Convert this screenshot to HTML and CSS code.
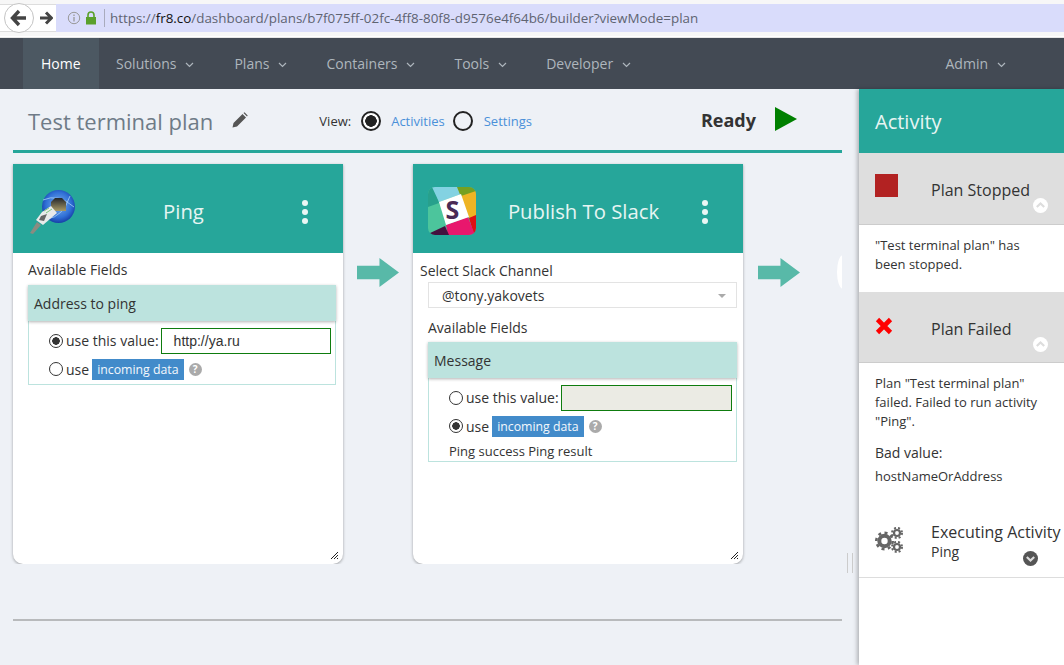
FILE: index.html
```html
<!DOCTYPE html>
<html lang="en">
<head>
    <meta charset="UTF-8">
    <title>Fr8 - Plan Builder</title>
    <link rel="stylesheet" href="styles.css">
</head>
<body>

    <!-- browser chrome -->
    <div class="browser-bar">
        <div class="nav-btns">
            <span class="back-btn">
                <svg width="20" height="20" viewBox="0 0 20 20"><path d="M10 3 L3.5 10 L10 17 M4 10 H17" fill="none" stroke="#444" stroke-width="3.4"/></svg>
            </span>
            <span class="fwd-btn">
                <svg width="14" height="14" viewBox="0 0 14 14"><path d="M7 1.5 L12.5 7 L7 12.5 M12 7 H1" fill="none" stroke="#444" stroke-width="3"/></svg>
            </span>
        </div>
        <div class="url-bar">
            <svg class="info-icon" width="14" height="14" viewBox="0 0 14 14"><circle cx="7" cy="7" r="5.7" fill="none" stroke="#999" stroke-width="1"/><path d="M7 6 V10.5 M7 3.4 V5" stroke="#999" stroke-width="1.3"/></svg>
            <svg class="lock-icon" width="12" height="14" viewBox="0 0 12 14"><path d="M3 6 V4 A3 3 0 0 1 9 4 V6" fill="none" stroke="#5aa02c" stroke-width="1.6"/><rect x="1" y="6" width="10" height="7.5" fill="#5aa02c"/></svg>
            <span class="url-sep"></span>
            <span class="url-text">https://<b>fr8.co</b>/dashboard/plans/b7f075ff-02fc-4ff8-80f8-d9576e4f64b6/builder?viewMode=plan</span>
        </div>
    </div>

    <!-- main nav -->
    <nav class="topnav">
        <a class="nav-item active">Home</a>
        <a class="nav-item">Solutions <svg class="caret" width="9" height="6" viewBox="0 0 9 6"><path d="M1 1 L4.5 4.5 L8 1" fill="none" stroke="#aeb6bd" stroke-width="1.2"/></svg></a>
        <a class="nav-item">Plans <svg class="caret" width="9" height="6" viewBox="0 0 9 6"><path d="M1 1 L4.5 4.5 L8 1" fill="none" stroke="#aeb6bd" stroke-width="1.2"/></svg></a>
        <a class="nav-item">Containers <svg class="caret" width="9" height="6" viewBox="0 0 9 6"><path d="M1 1 L4.5 4.5 L8 1" fill="none" stroke="#aeb6bd" stroke-width="1.2"/></svg></a>
        <a class="nav-item">Tools <svg class="caret" width="9" height="6" viewBox="0 0 9 6"><path d="M1 1 L4.5 4.5 L8 1" fill="none" stroke="#aeb6bd" stroke-width="1.2"/></svg></a>
        <a class="nav-item">Developer <svg class="caret" width="9" height="6" viewBox="0 0 9 6"><path d="M1 1 L4.5 4.5 L8 1" fill="none" stroke="#aeb6bd" stroke-width="1.2"/></svg></a>
        <a class="nav-item admin">Admin <svg class="caret" width="9" height="6" viewBox="0 0 9 6"><path d="M1 1 L4.5 4.5 L8 1" fill="none" stroke="#aeb6bd" stroke-width="1.2"/></svg></a>
    </nav>

    <div class="content">
        <div class="builder">
            <div class="plan-head">
                <h1 class="plan-title">Test terminal plan</h1>
                <svg class="pencil" width="16" height="16" viewBox="0 0 16 16"><path d="M0.5 15.5 L1.5 11 L10.5 2 L14 5.5 L5 14.5 Z M11.5 1 L12.5 0.3 L15.7 3.5 L15 4.5 Z" fill="#555"/></svg>
                <span class="view-label">View:</span>
                <span class="big-radio on"></span>
                <a class="view-link">Activities</a>
                <span class="big-radio off"></span>
                <a class="view-link settings">Settings</a>
                <span class="ready">Ready</span>
                <svg class="play" width="22" height="24" viewBox="0 0 22 24"><path d="M0 0 L22 12 L0 24 Z" fill="#008000"/></svg>
            </div>

            <div class="cards">
                <!-- Ping card -->
                <section class="card">
                    <header class="card-head">
                        <svg class="card-logo" width="48" height="48" viewBox="0 0 48 48">
                            <defs>
                                <radialGradient id="globeFill" cx="0.5" cy="0.45" r="0.55">
                                    <stop offset="0" stop-color="#7fb2ec"/>
                                    <stop offset="0.7" stop-color="#2f6fd6"/>
                                    <stop offset="1" stop-color="#173fa8"/>
                                </radialGradient>
                                <linearGradient id="portFill" x1="0" y1="0" x2="0" y2="1">
                                    <stop offset="0" stop-color="#23262c"/>
                                    <stop offset="1" stop-color="#a89a66"/>
                                </linearGradient>
                            </defs>
                            <circle cx="30.5" cy="19.5" r="16.5" fill="url(#globeFill)"/>
                            <path d="M15 13 Q30 6 46 20 M19 32 Q35 30 42 9" fill="none" stroke="#a8d0f5" stroke-width="0.8"/>
                            <path d="M23 15 L27 11 H34 L38 15 V24 H23 Z" fill="url(#portFill)"/>
                            <path d="M14 25 L23 19 L29 26 L15 38 L8 33 Z" fill="#e8eaea"/>
                            <path d="M16 24 L21 21 M18 26 L24 22" stroke="#7fc77f" stroke-width="1"/>
                            <path d="M13 29 L19 27 L16 34 L11 33 Z" fill="#666"/>
                            <path d="M9 35 L2 46 L5 47 L13 38 Z" fill="#8b8b80"/>
                        </svg>
                        <span class="card-title">Ping</span>
                        <span class="dots"><i></i><i></i><i></i></span>
                    </header>
                    <div class="card-body">
                        <div class="fld-label">Available Fields</div>
                        <div class="field-box">
                            <div class="field-head">Address to ping</div>
                            <div class="field-opts">
                                <div class="opt-row first">
                                    <span class="radio on"></span>
                                    <span class="opt-label">use this value:</span>
                                    <span class="val-input">http://ya.ru</span>
                                </div>
                                <div class="opt-row">
                                    <span class="radio"></span>
                                    <span>use</span>
                                    <span class="chip">incoming data</span>
                                    <span class="help">?</span>
                                </div>
                            </div>
                        </div>
                    </div>
                    <span class="grip"></span>
                </section>

                <svg class="arrow" width="42" height="29" viewBox="0 0 43 30" preserveAspectRatio="none"><path d="M0 8 H23 V0 L43 15 L23 30 V22 H0 Z" fill="#58b9a8"/></svg>

                <!-- Slack card -->
                <section class="card">
                    <header class="card-head">
                        <svg class="card-logo slack-logo" width="48" height="48" viewBox="0 0 48 48">
                            <defs><clipPath id="slackClip"><rect width="48" height="48" rx="7"/></clipPath></defs>
                            <g clip-path="url(#slackClip)">
                                <rect width="48" height="48" fill="#4cc59c"/>
                                <path d="M0 0 H6 L11 16 L0 20 Z" fill="#27a08c"/>
                                <path d="M4 0 H30 L33 7 L11 15 Z" fill="#83d2e2"/>
                                <path d="M29 0 H48 V5 L33 10 Z" fill="#75a021"/>
                                <path d="M33 9 L48 4 V29 L41 31 Z" fill="#eeb424"/>
                                <path d="M41 31 L48 28 V48 H46 Z" fill="#dc0f14"/>
                                <path d="M18 38 L40 30 L47 48 H20 Z" fill="#e8176d"/>
                                <path d="M0 47 L17 39 L21 48 H0 Z" fill="#44103f"/>
                                <path d="M11 15 L33 7 L41 30 L18 38 Z" fill="#fff"/>
                                <text x="24.5" y="32" text-anchor="middle" class="slack-s">S</text>
                            </g>
                        </svg>
                        <span class="card-title">Publish To Slack</span>
                        <span class="dots"><i></i><i></i><i></i></span>
                    </header>
                    <div class="card-body slack-body">
                        <div class="channel-label">Select Slack Channel</div>
                        <div class="select-box">@tony.yakovets<span class="sel-caret"></span></div>
                        <div class="fld-label second">Available Fields</div>
                        <div class="field-box">
                            <div class="field-head">Message</div>
                            <div class="field-opts">
                                <div class="opt-row first">
                                    <span class="radio"></span>
                                    <span class="opt-label">use this value:</span>
                                    <span class="val-input empty"></span>
                                </div>
                                <div class="opt-row">
                                    <span class="radio on"></span>
                                    <span>use</span>
                                    <span class="chip">incoming data</span>
                                    <span class="help">?</span>
                                </div>
                                <div class="ping-res">Ping success Ping result</div>
                            </div>
                        </div>
                    </div>
                    <span class="grip"></span>
                </section>

                <svg class="arrow next" width="42" height="29" viewBox="0 0 43 30" preserveAspectRatio="none"><path d="M0 8 H23 V0 L43 15 L23 30 V22 H0 Z" fill="#58b9a8"/></svg>
                <span class="next-card"></span>
            </div>

            <hr class="bottom-rule">
        </div>

        <span class="splitter"></span>

        <!-- activity panel -->
        <aside class="activity">
            <div class="activity-head">Activity</div>

            <div class="act-row">
                <span class="act-icon"><span class="stop-sq"></span></span>
                <span class="act-title">Plan Stopped</span>
                <svg class="chev-btn" width="15" height="15" viewBox="0 0 15 15"><circle cx="7.5" cy="7.5" r="7.5" fill="#fff"/><path d="M3.8 9 L7.5 5.5 L11.2 9" fill="none" stroke="#ddd" stroke-width="2.2"/></svg>
            </div>
            <div class="act-text stopped">"Test terminal plan" has been stopped.</div>

            <div class="act-row failed">
                <span class="act-icon">
                    <svg width="18" height="18" viewBox="0 0 18 18"><path d="M2.5 2.5 L15.5 15.5 M15.5 2.5 L2.5 15.5" stroke="#f00" stroke-width="4.6"/></svg>
                </span>
                <span class="act-title">Plan Failed</span>
                <svg class="chev-btn" width="15" height="15" viewBox="0 0 15 15"><circle cx="7.5" cy="7.5" r="7.5" fill="#fff"/><path d="M3.8 9 L7.5 5.5 L11.2 9" fill="none" stroke="#ddd" stroke-width="2.2"/></svg>
            </div>
            <div class="act-text fail-text">
                <p>Plan "Test terminal plan" failed. Failed to run activity "Ping".</p>
                <p class="bad">Bad value:</p>
                <p class="host">hostNameOrAddress</p>
            </div>

            <div class="exec-row">
                <svg class="gears" width="30" height="26" viewBox="0 0 30 26">
                    <g fill="none" stroke="#666">
                        <circle cx="10.5" cy="14" r="5.2" stroke-width="4"/>
                        <circle cx="10.5" cy="14" r="8.2" stroke-width="2.6" stroke-dasharray="3 3.4"/>
                        <circle cx="23" cy="6" r="3" stroke-width="2.2"/>
                        <circle cx="23" cy="6" r="5" stroke-width="2" stroke-dasharray="2 2"/>
                        <circle cx="23" cy="20" r="3" stroke-width="2.2"/>
                        <circle cx="23" cy="20" r="5" stroke-width="2" stroke-dasharray="2 2"/>
                    </g>
                </svg>
                <div class="exec-text">
                    <div class="act-title">Executing Activity</div>
                    <div class="exec-sub">Ping</div>
                </div>
                <svg class="chev-btn down" width="15" height="15" viewBox="0 0 15 15"><circle cx="7.5" cy="7.5" r="7.5" fill="#555"/><path d="M3.8 6 L7.5 9.5 L11.2 6" fill="none" stroke="#ddd" stroke-width="2.2"/></svg>
            </div>
        </aside>
    </div>

</body>
</html>
```

FILE: styles.css
```css
* {
    box-sizing: border-box;
}

html, body {
    margin: 0;
    height: 665px;
    overflow: hidden;
}

body {
    font-family: "Open Sans", "Noto Sans", sans-serif;
    font-size: 14px;
    color: #333;
    background-color: #eef1f6;
}

/* browser chrome */
.browser-bar {
    height: 38px;
    padding-top: 4px;
    display: flex;
    background-color: #f7f7f7;
    border-bottom: 1px solid #e6e6e6;
    box-shadow: inset 0 -1px 0 #fff;
}

.nav-btns {
    width: 56px;
    height: 28px;
    padding-left: 4px;
    display: flex;
    align-items: center;
    background-color: #fff;
    border-top: 1px solid #ddd;
    border-bottom: 1px solid #ddd;
}

.back-btn {
    width: 30px;
    height: 30px;
    flex: none;
    display: flex;
    align-items: center;
    justify-content: center;
    border: 1px solid #c4c4c4;
    border-radius: 50%;
    background-color: #fff;
}

.fwd-btn {
    margin-left: 5px;
    display: flex;
}

.url-bar {
    flex: 1;
    height: 28px;
    display: flex;
    align-items: center;
    padding-left: 6px;
    background-color: #d9dcfb;
    font-family: "Open Sans", sans-serif;
    font-size: 13.4px;
    color: #5f6472;
    white-space: nowrap;
}

.info-icon {
    margin-left: 5px;
}

.lock-icon {
    margin-left: 4px;
}

.url-sep {
    width: 1px;
    height: 18px;
    margin: 0 5px 0 7px;
    background-color: #a9abbd;
}

.url-text b {
    font-weight: normal;
    color: #111;
}

/* main nav */
.topnav {
    height: 51px;
    padding-left: 23px;
    display: flex;
    background-color: #434a54;
}

.nav-item {
    height: 51px;
    padding: 0 18px;
    display: flex;
    align-items: center;
    gap: 9px;
    color: #aeb6bd;
    font-size: 14px;
    white-space: nowrap;
    margin-right: -1px;
}

.nav-item.active {
    color: #fff;
    background-color: #4c5862;
    width: 76px;
    margin-right: 0;
}

.nav-item:nth-child(2) { margin-left: -1px; }
.nav-item:nth-child(3) { margin-left: 5px; }
.nav-item:nth-child(4) { margin-left: 4px; }
.nav-item:nth-child(5) { margin-left: 4px; }
.nav-item:nth-child(6) { margin-left: 4px; }

.nav-item.admin {
    margin-left: auto;
    margin-right: 40px;
}

.caret {
    margin-top: 2px;
}

/* builder area */
.content {
    height: 576px;
    display: flex;
}

.builder {
    width: 842px;
    padding-left: 13px;
    flex: none;
    overflow: hidden;
}

.plan-head {
    height: 64px;
    padding-left: 15px;
    padding-top: 3px;
    display: flex;
    align-items: center;
    border-bottom: 3px solid #26a69a;
}

.plan-title {
    margin: 0;
    font-size: 22px;
    font-weight: normal;
    color: #6f7b87;
    white-space: nowrap;
}

.pencil {
    margin-left: 19px;
    margin-top: -2px;
}

.view-label {
    margin-left: 71px;
    font-size: 13px;
}

.big-radio {
    width: 20px;
    height: 20px;
    margin-left: 10px;
    flex: none;
    border: 2.5px solid #222;
    border-radius: 50%;
    background-color: #fff;
}

.big-radio.on {
    background: radial-gradient(circle, #222 0 5.5px, #fff 6px);
}

.big-radio.off {
    margin-left: 8px;
    background-color: transparent;
}

.view-link {
    margin-left: 10px;
    font-size: 13px;
    color: #4a90d9;
}

.view-link.settings {
    margin-left: 11px;
}

.ready {
    margin-left: 169px;
    margin-top: -2px;
    font-size: 18px;
    font-weight: bold;
    color: #333;
}

.play {
    margin-left: 19px;
    margin-top: -4px;
}

.cards {
    margin-left: -13px;
    padding-left: 13px;
    padding-top: 11px;
    height: 411px;
    display: flex;
    align-items: flex-start;
    width: 842px;
    overflow: hidden;
}

.card {
    position: relative;
    width: 330px;
    height: 400px;
    flex: none;
    background-color: #fff;
    border-radius: 0 0 10px 10px;
    box-shadow: 0 1px 3px rgba(0, 0, 0, 0.35);
}

.card-head {
    height: 89px;
    padding: 6px 35px 0 15px;
    display: flex;
    align-items: center;
    background-color: #26a69a;
}

.card-logo {
    flex: none;
    margin-top: -2px;
}

.slack-s {
    font-family: "Open Sans", sans-serif;
    font-weight: bold;
    font-size: 25px;
    fill: #4a2a55;
}

.card-title {
    flex: 1;
    text-align: center;
    color: #e6f5f3;
    font-size: 20.3px;
    margin: -2px 2px 0 0;
}

.dots {
    width: 6px;
    display: flex;
    flex-direction: column;
    gap: 3px;
    margin-left: 9px;
}

.dots i {
    width: 6px;
    height: 6px;
    border-radius: 50%;
    background-color: #eaf6f4;
}

.card-body {
    padding: 7px 7px 0 15px;
    font-size: 14px;
}

.fld-label {
    line-height: 20px;
}

.field-box {
    margin-top: 5px;
    border: 1px solid #bce3de;
    border-top: 0;
}

.field-head {
    height: 36px;
    margin: 0 -1px;
    padding-left: 6px;
    display: flex;
    align-items: center;
    background-color: #bce3de;
    box-shadow: 0 1px 3px rgba(0, 0, 0, 0.3);
}

.field-opts {
    padding: 7px 4px 0 20px;
}

.opt-row {
    height: 30px;
    display: flex;
    align-items: center;
    gap: 3px;
    white-space: nowrap;
}

.opt-row.first {
    height: 26px;
}

.opt-label {
    margin-top: -2px;
}

.radio {
    width: 14px;
    height: 14px;
    flex: none;
    border: 1px solid #333;
    border-radius: 50%;
    background-color: #fff;
}

.radio.on {
    background: radial-gradient(circle, #333 0 3.5px, #fff 4px);
}

.val-input {
    height: 26px;
    flex: 1;
    margin-left: -1px;
    padding-left: 12px;
    line-height: 25px;
    font-family: "Liberation Sans", Arial, sans-serif;
    border: 1px solid #0e7c0e;
    background-color: #fff;
}

.val-input.empty {
    background-color: #ebebe4;
}

.chip {
    height: 21px;
    padding: 0 5px;
    line-height: 21px;
    font-size: 12.3px;
    color: #f4f8fc;
    background-color: #428bca;
}

.help {
    width: 13px;
    height: 13px;
    margin-left: 2px;
    border-radius: 50%;
    background-color: #aaa;
    color: #fff;
    font-size: 10px;
    font-weight: bold;
    line-height: 13px;
    text-align: center;
}

.grip {
    position: absolute;
    right: 5px;
    bottom: 5px;
    width: 8px;
    height: 8px;
    background: repeating-linear-gradient(135deg, #222 0 1px, #fff 1px 2px);
    clip-path: polygon(100% 0, 100% 100%, 0 100%);
}

.arrow {
    flex: none;
    margin: 94px 14px 0 14px;
}

.arrow.next {
    margin-left: 15px;
}

.next-card {
    width: 6px;
    height: 34px;
    margin: 91px 0 0 23px;
    flex: none;
    background-color: #fff;
    border-radius: 6px 0 0 6px / 17px 0 0 17px;
}

.slack-body {
    padding: 9px 6px 0 7px;
    font-size: 14px;
}

.channel-label {
    line-height: 17px;
}

.select-box {
    position: relative;
    height: 26px;
    margin: 3px 0 0 8px;
    padding-left: 13px;
    line-height: 25px;
    border: 1px solid #e3e3e3;
}

.sel-caret {
    position: absolute;
    right: 10px;
    top: 11px;
    border: 4px solid transparent;
    border-top: 4px solid #aaa;
    border-bottom: 0;
}

.fld-label.second {
    margin: 10px 0 0 8px;
}

.slack-body .field-box {
    margin-left: 8px;
    margin-top: 4px;
}

.ping-res {
    font-size: 13px;
    line-height: 20px;
}

.bottom-rule {
    margin: 55px 0 0;
    height: 2px;
    width: 829px;
    border: 0;
    background-color: #b8babc;
}

.splitter {
    width: 6px;
    height: 20px;
    margin: 464px 0 0 5px;
    flex: none;
    border-left: 1px solid #ccc;
    border-right: 1px solid #ccc;
}

/* activity panel */
.activity {
    width: 205px;
    flex: none;
    margin-left: 6px;
    background-color: #fff;
    box-shadow: -2px 0 4px rgba(0, 0, 0, 0.25);
    overflow: hidden;
}

.activity-head {
    height: 64px;
    padding-left: 16px;
    line-height: 66px;
    font-size: 20px;
    color: #e6f5f3;
    background-color: #26a69a;
}

.act-row {
    position: relative;
    height: 72px;
    display: flex;
    align-items: center;
    background-color: #dedede;
    border-bottom: 1px solid #ccc;
    padding-top: 2px;
}

.act-icon {
    width: 72px;
    padding-left: 16px;
    flex: none;
    display: flex;
}

.stop-sq {
    width: 23px;
    height: 23px;
    margin-top: -8px;
    background-color: #b22222;
}

.act-title {
    font-size: 16px;
    white-space: nowrap;
}

.chev-btn {
    position: absolute;
    left: 174px;
    top: 45px;
}

.act-text {
    padding: 11px 24px 0 16px;
    font-size: 13px;
    line-height: 19px;
}

.act-text.stopped {
    height: 67px;
    padding-right: 30px;
}

.act-row.failed {
    height: 71px;
    padding-top: 4px;
}

.act-row.failed .act-icon svg {
    margin-top: -6px;
}

.act-text p {
    margin: 0;
}

.act-text .bad {
    margin-top: 12px;
    font-size: 14px;
}

.act-text .host {
    margin-top: 5px;
}

.exec-row {
    position: relative;
    height: 92px;
    padding: 36px 0 0 15px;
    display: flex;
    align-items: flex-start;
    border-bottom: 1px solid #ddd;
}

.gears {
    flex: none;
    margin-top: 5px;
}

.exec-text {
    margin-left: 27px;
    line-height: 20px;
}

.exec-sub {
    font-size: 14px;
}

.chev-btn.down {
    left: 164px;
    top: 65px;
}
```
